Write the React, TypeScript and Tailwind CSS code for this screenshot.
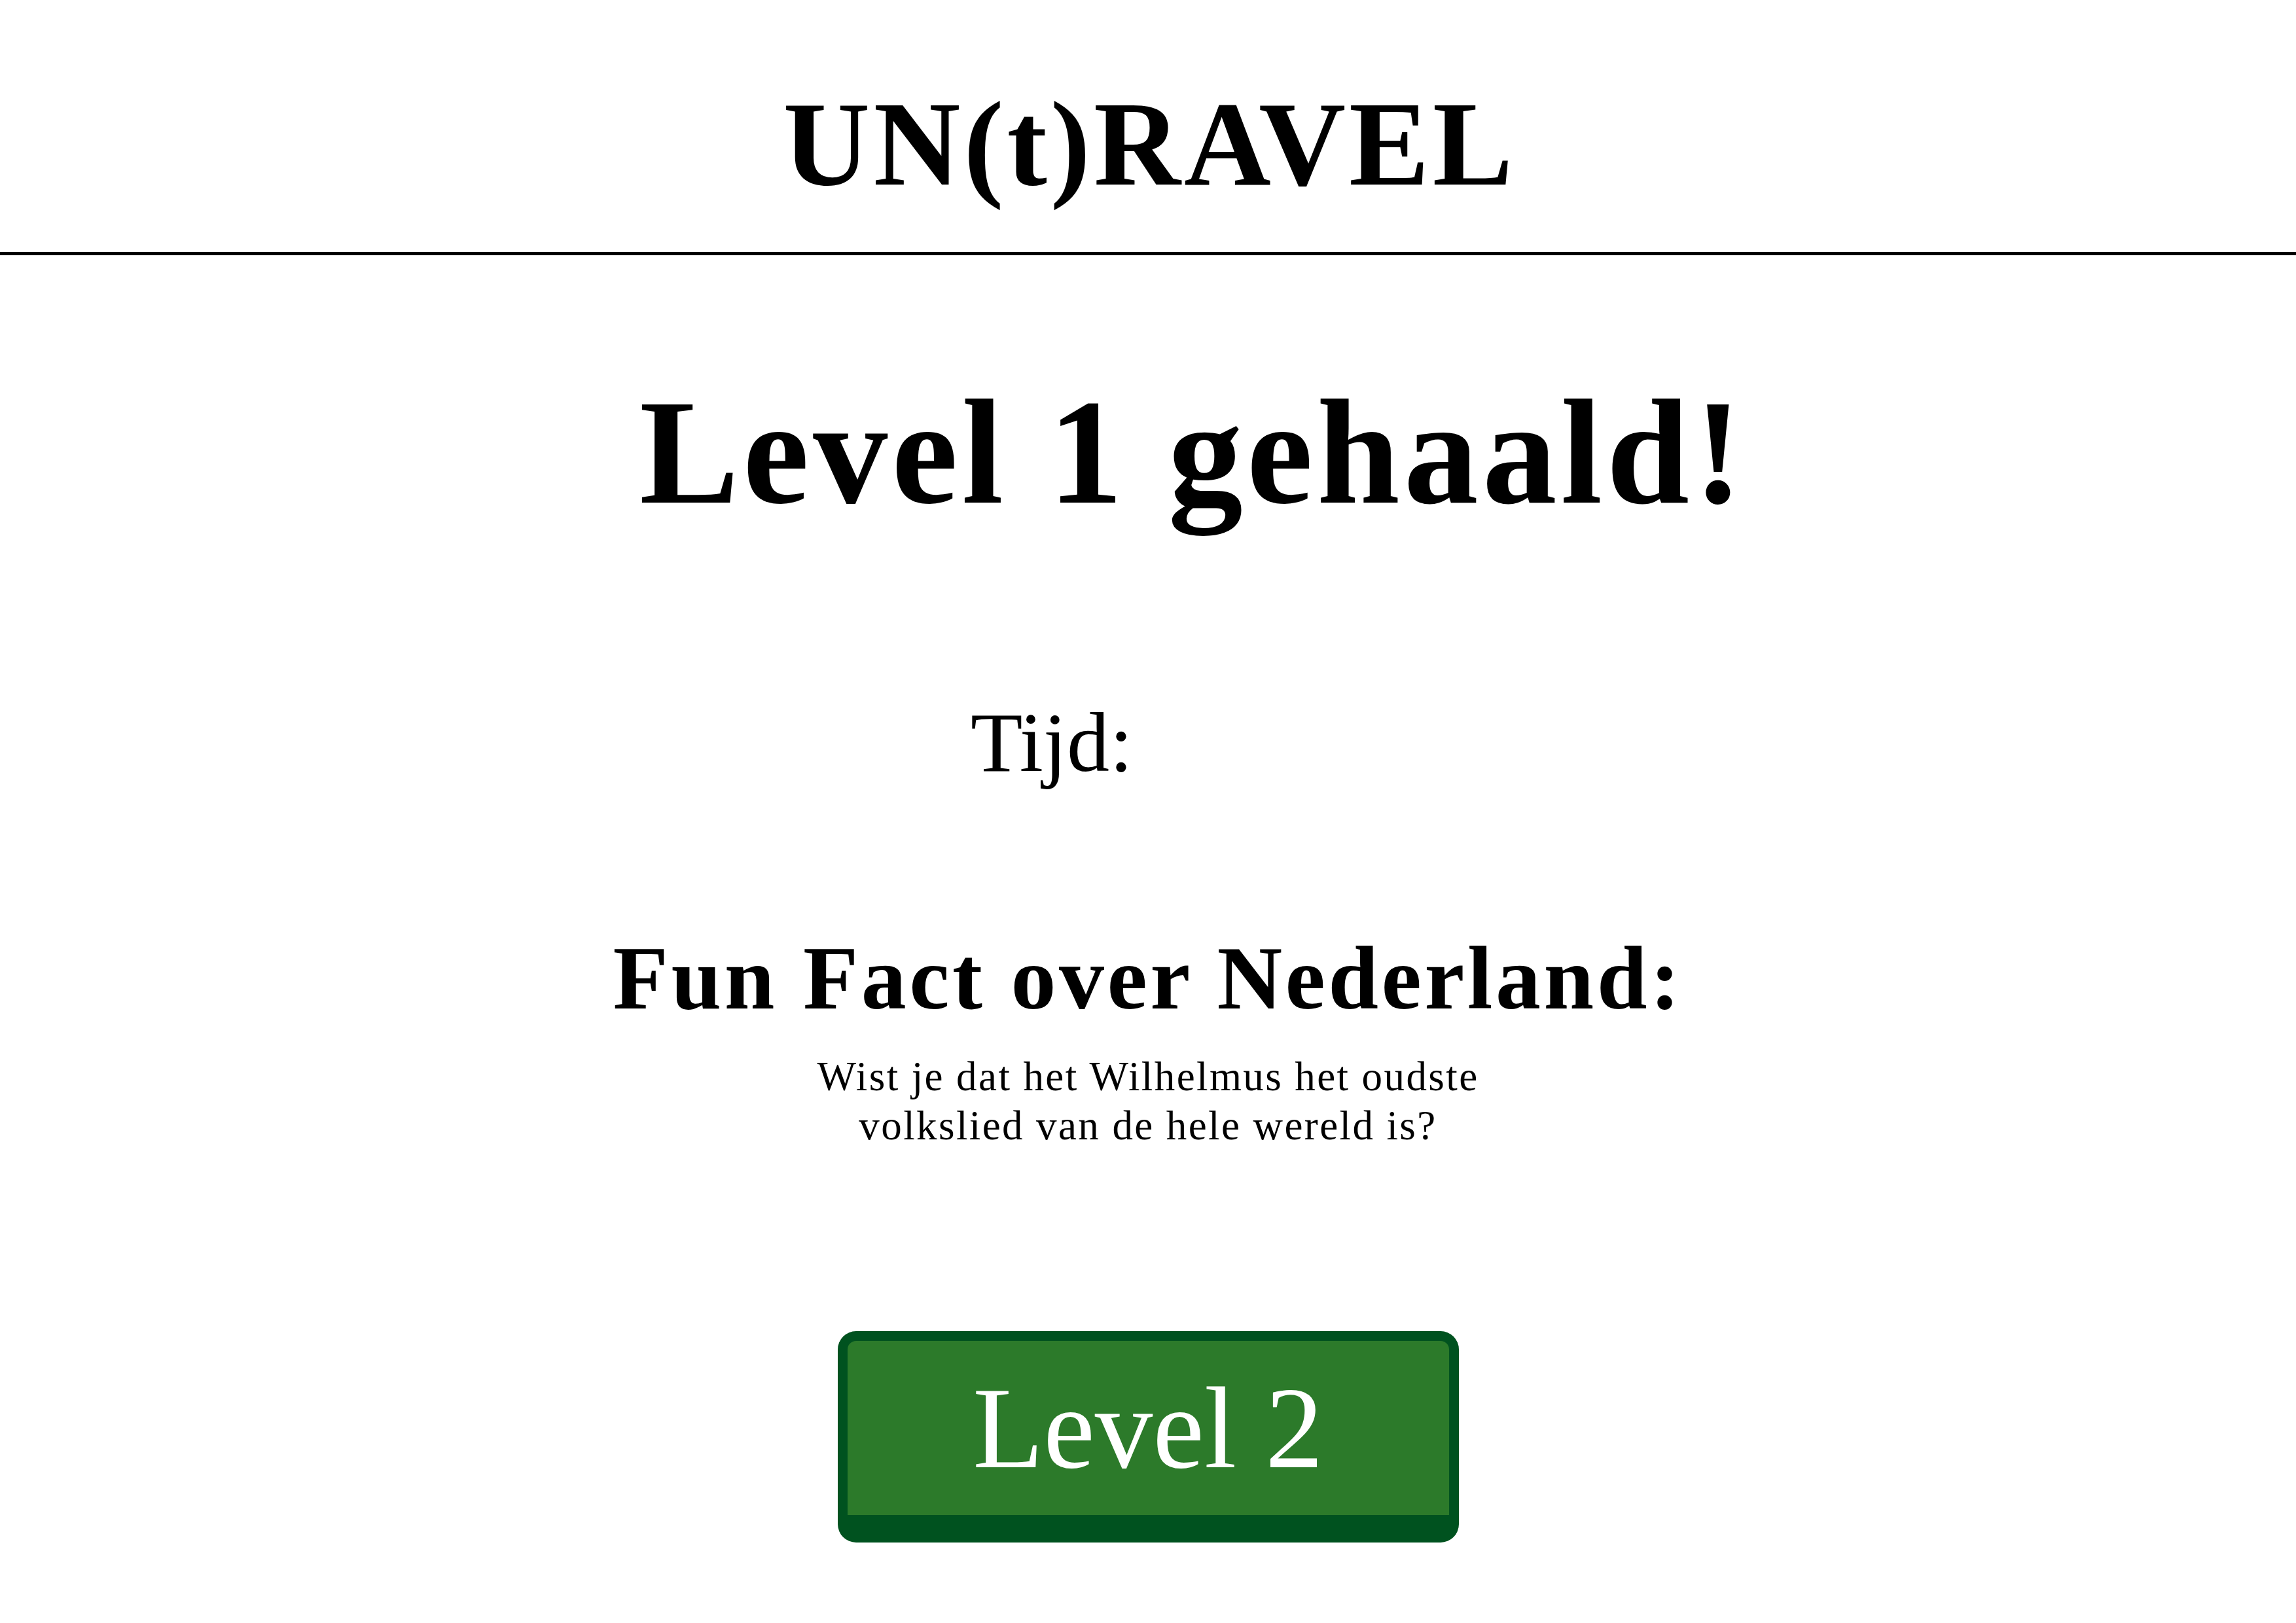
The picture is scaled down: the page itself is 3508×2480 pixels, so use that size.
const serif = { fontFamily: '"Liberation Serif", "Times New Roman", serif' };

export default function App() {
  return (
    <div className="min-h-screen w-full bg-white text-black" style={serif}>
      {/* header */}
      <header className="border-b-[5px] border-black pt-[128px] pb-[73px] text-center">
        <h1 className="pl-[5px] text-[184px] font-bold leading-none tracking-[5px]">UN(t)RAVEL</h1>
      </header>

      <main className="flex flex-col items-center">
        <h2 className="mt-[187px] pl-[138px] text-[228px] font-bold leading-none tracking-[6px]">
          Level 1 gehaald!
        </h2>

        <div className="mt-[264px] flex items-center text-[130px] leading-none">
          <span>Tijd:</span>
          <span className="w-[294px]"></span>
        </div>

        <h3 className="mt-[227px] text-[138px] font-bold leading-none tracking-[4.5px]">
          Fun Fact over Nederland:
        </h3>
        <p className="mt-[44px] w-[1120px] text-center text-[63px] leading-[75px] tracking-[2.4px]">
          Wist je dat het Wilhelmus het oudste volkslied van de hele wereld is?
        </p>

        <button className="mt-[276px] mb-[120px] w-[949px] rounded-[28px] border-[15px] border-b-[42px] border-[#00521f] bg-[#2c7a2a]">
          <span className="flex h-[266px] items-center justify-center text-[177px] leading-none text-white">
            Level 2
          </span>
        </button>
      </main>
    </div>
  );
}
